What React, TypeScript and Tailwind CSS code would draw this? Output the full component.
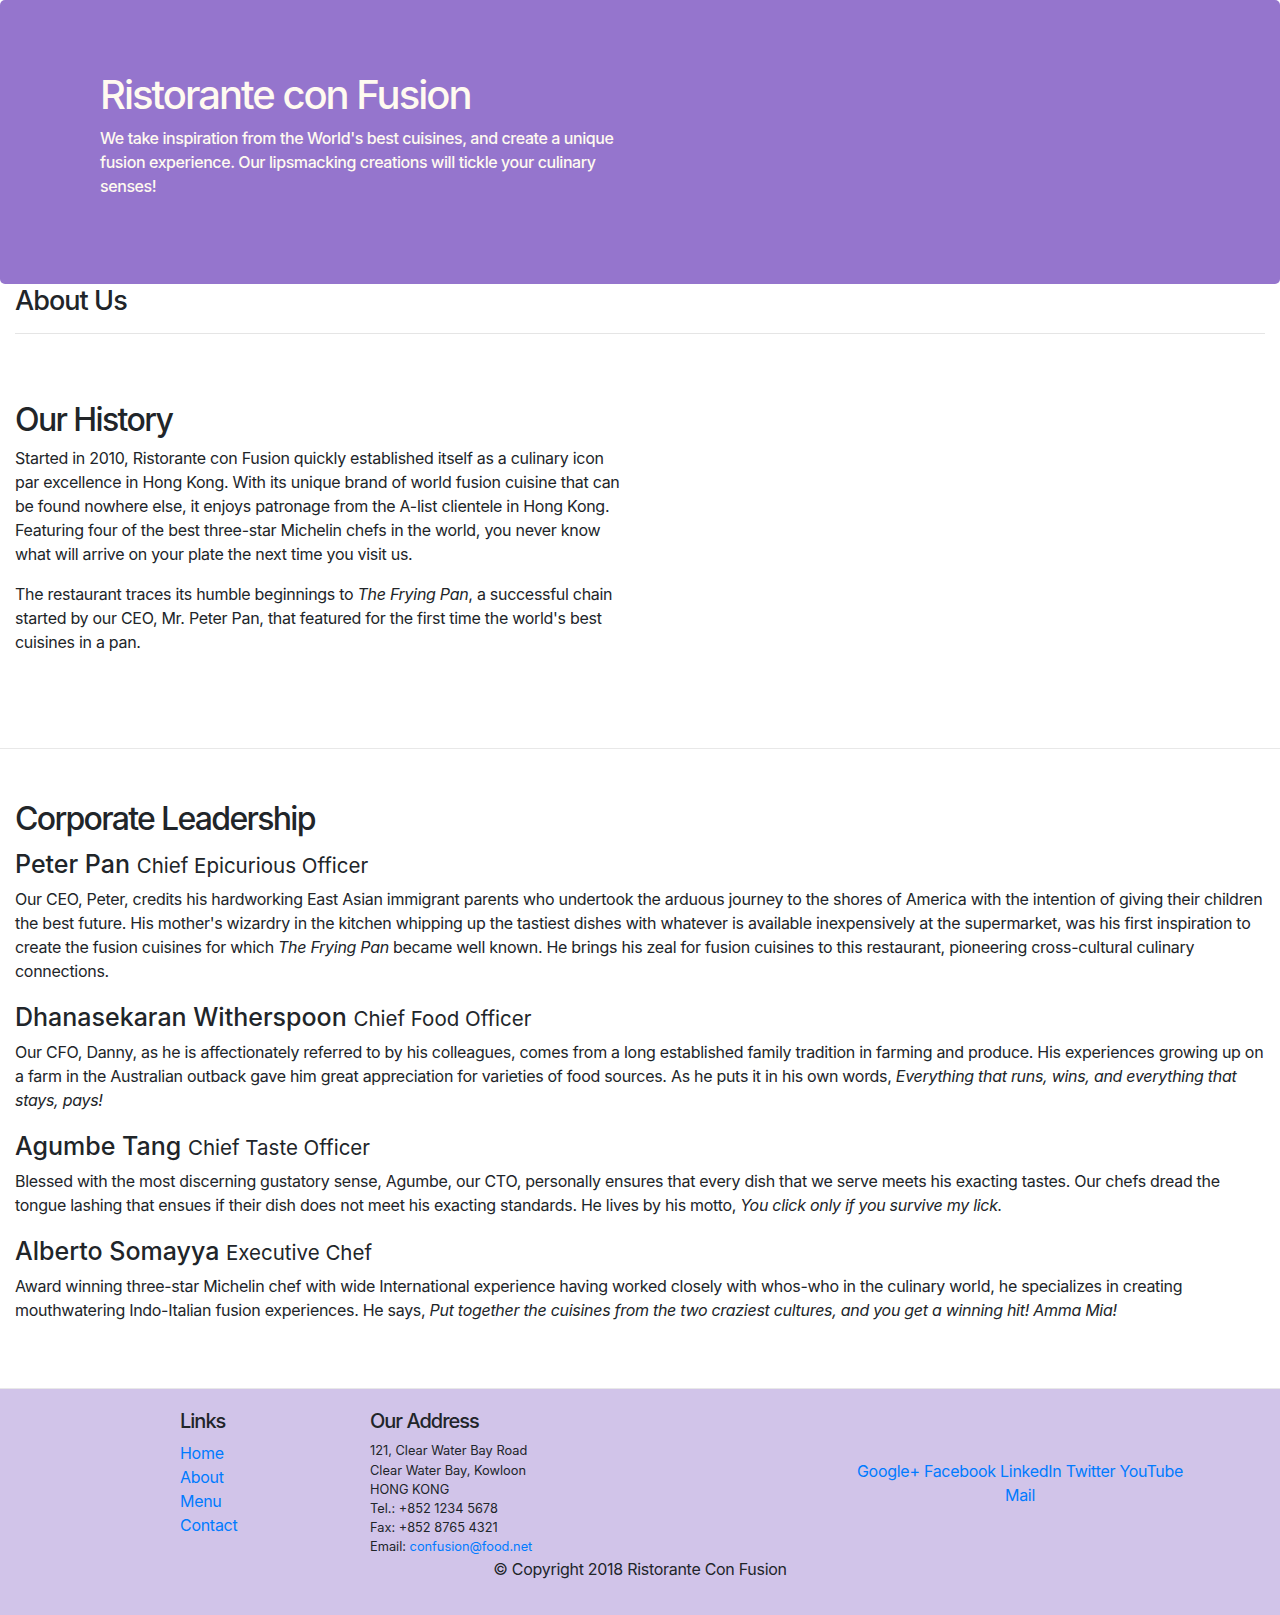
import { FC, ReactNode } from "react";

const leaders: { name: string; title: string; text: ReactNode }[] = [
	{
		name: "Peter Pan",
		title: "Chief Epicurious Officer",
		text: (
			<>
				Our CEO, Peter, credits his hardworking East Asian immigrant parents who undertook the arduous journey to the shores of America with the intention of giving their children the best future. His mother's wizardry in the kitchen whipping up the tastiest dishes with whatever is available inexpensively at the supermarket, was his first inspiration to create the fusion cuisines for which <em>The Frying Pan</em> became well known. He brings his zeal for fusion cuisines to this restaurant, pioneering cross-cultural culinary connections.
			</>
		),
	},
	{
		name: "Dhanasekaran Witherspoon",
		title: "Chief Food Officer",
		text: (
			<>
				Our CFO, Danny, as he is affectionately referred to by his colleagues, comes from a long established family tradition in farming and produce. His experiences growing up on a farm in the Australian outback gave him great appreciation for varieties of food sources. As he puts it in his own words, <em>Everything that runs, wins, and everything that stays, pays!</em>
			</>
		),
	},
	{
		name: "Agumbe Tang",
		title: "Chief Taste Officer",
		text: (
			<>
				Blessed with the most discerning gustatory sense, Agumbe, our CTO, personally ensures that every dish that we serve meets his exacting tastes. Our chefs dread the tongue lashing that ensues if their dish does not meet his exacting standards. He lives by his motto, <em>You click only if you survive my lick.</em>
			</>
		),
	},
	{
		name: "Alberto Somayya",
		title: "Executive Chef",
		text: (
			<>
				Award winning three-star Michelin chef with wide International experience having worked closely with whos-who in the culinary world, he specializes in creating mouthwatering Indo-Italian fusion experiences. He says, <em>Put together the cuisines from the two craziest cultures, and you get a winning hit! Amma Mia!</em>
			</>
		),
	},
];

const Header: FC = () => (
	<header className="bg-[#9575cd] rounded-[5px] pt-[71px] pb-[86px] pl-[100px] text-[#fffaf0]">
		<h1 className="text-[40px] leading-[48px] font-medium tracking-[-0.05em] mb-[7px]">Ristorante con Fusion</h1>
		<p className="w-[540px] text-base leading-6 font-medium tracking-[-0.026em]">
			We take inspiration from the World's best cuisines, and create a unique fusion experience. Our lipsmacking creations will tickle your culinary senses!
		</p>
	</header>
);

const Footer: FC = () => (
	<footer className="bg-[#d1c4e9] py-5">
		<div className="w-[1140px] mx-auto">
			<div className="flex">
				<div className="w-[190px] ml-[95px] px-[15px]">
					<h5 className="text-xl leading-6 font-medium tracking-[-0.05em] mb-2">Links</h5>
					<ul className="mb-4 text-[#007bff]">
						<li>Home</li>
						<li>About</li>
						<li>Menu</li>
						<li>Contact</li>
					</ul>
				</div>
				<div className="w-[475px] px-[15px]">
					<h5 className="text-xl leading-6 font-medium tracking-[-0.05em] mb-2">Our Address</h5>
					<address className="not-italic text-[12.8px] leading-[19.2px] tracking-normal">
						121, Clear Water Bay Road<br />
						Clear Water Bay, Kowloon<br />
						HONG KONG<br />
						Tel.: +852 1234 5678<br />
						Fax: +852 8765 4321<br />
						Email: <span className="text-[#007bff]">confusion@food.net</span>
					</address>
				</div>
				<div className="w-[380px] px-[15px] self-center text-center text-[#007bff]">
					<div>Google+ Facebook LinkedIn Twitter YouTube</div>
					<div>Mail</div>
				</div>
			</div>
			<p className="text-center mb-4">© Copyright 2018 Ristorante Con Fusion</p>
		</div>
	</footer>
);

export default function App() {
	return (
		<div className="font-['Inter',sans-serif] text-[#212529] text-base leading-6 tracking-[-0.018em] bg-white">
			<Header />
			<div className="px-[15px]">
				<h3 className="text-[27px] leading-[33.6px] font-medium tracking-[-0.035em]">About Us</h3>
				<hr className="mt-[15px] mb-4 border-t border-[#e5e5e5]" />
			</div>
			<section className="px-[15px] pt-[51px] pb-[78px] border-b border-[#e8e8e8]">
				<h2 className="text-[32px] leading-[38.4px] font-medium tracking-[-0.05em] mb-[7px]">Our History</h2>
				<div className="w-[610px]">
					<p className="mb-4">
						Started in 2010, Ristorante con Fusion quickly established itself as a culinary icon par excellence in Hong Kong. With its unique brand of world fusion cuisine that can be found nowhere else, it enjoys patronage from the A-list clientele in Hong Kong. Featuring four of the best three-star Michelin chefs in the world, you never know what will arrive on your plate the next time you visit us.
					</p>
					<p className="mb-4">
						The restaurant traces its humble beginnings to <em>The Frying Pan</em>, a successful chain started by our CEO, Mr. Peter Pan, that featured for the first time the world's best cuisines in a pan.
					</p>
				</div>
			</section>
			<section className="px-[15px] pt-[51px] pb-[48px] border-b border-[#e8e8e8]">
				<h2 className="text-[32px] leading-[38.4px] font-medium tracking-[-0.053em] mb-[10px]">Corporate Leadership</h2>
				{leaders.map((l) => (
					<div key={l.name}>
						<h4 className="text-[25px] leading-[32px] font-medium tracking-normal mb-[5px]">
							{l.name} <small className="text-[20.5px] font-normal">{l.title}</small>
						</h4>
						<p className="mb-[18px]">{l.text}</p>
					</div>
				))}
			</section>
			<Footer />
		</div>
	);
}
